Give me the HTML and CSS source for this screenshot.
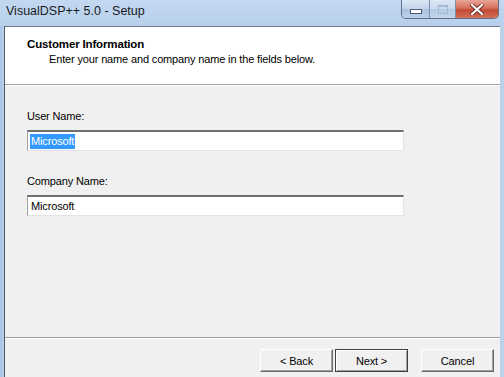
FILE: index.html
```html
<!DOCTYPE html>
<html lang="en-US">
    <head>
        <meta charset="utf-8">
        <title>VisualDSP++ 5.0 - Setup</title>
        <link rel="stylesheet" href="styles.css">
    </head>
    <body>
        <div class="window">
            <div class="titlebar">
                <span class="title">VisualDSP++ 5.0 - Setup</span>
                <div class="controls">
                    <div class="ctl ctl-min"><span class="min-bar"></span></div>
                    <div class="ctl ctl-max"><span class="max-box"></span></div>
                    <div class="ctl ctl-close">
                        <svg width="14" height="11" viewBox="0 0 14 11">
                            <path d="M2 1 L12 10 M12 1 L2 10" stroke="#6a2a22" stroke-width="4" stroke-linecap="square"/>
                            <path d="M2 1 L12 10 M12 1 L2 10" stroke="#ffffff" stroke-width="2.2" stroke-linecap="square"/>
                        </svg>
                    </div>
                </div>
            </div>

            <div class="client">
                <header class="wizard-head">
                    <h1>Customer Information</h1>
                    <p>Enter your name and company name in the fields below.</p>
                </header>

                <main class="wizard-body">
                    <label class="field-label">User Name:</label>
                    <div class="textbox"><span class="selected">Microsoft</span></div>

                    <label class="field-label company">Company Name:</label>
                    <div class="textbox"><span>Microsoft</span></div>
                </main>

                <footer class="wizard-foot">
                    <button class="btn">&lt; Back</button>
                    <button class="btn btn-default">Next &gt;</button>
                    <button class="btn btn-cancel">Cancel</button>
                </footer>
            </div>
        </div>
    </body>
</html>
```

FILE: styles.css
```css
:root {
    font-family: 'Liberation Sans', Arial, sans-serif;
    font-size: 11px;
    letter-spacing: -0.15px;
    color: #000000;
}

body {
    margin: 0;
    width: 504px;
    height: 377px;
    overflow: hidden;
}

.window {
    display: flex;
    flex-direction: column;
    height: 377px;
    background: linear-gradient(to right, #a9c4e6 0, #bdd3ee 5px, #c7dbf2 50%, #bcd2ec 100%);
}

.titlebar {
    position: relative;
    height: 26px;
    background: linear-gradient(to bottom, #c3d8f1 0, #bcd3ee 60%, #b7cfeb 100%);
}

.title {
    position: absolute;
    left: 6px;
    top: 4px;
    font-size: 12.5px;
    letter-spacing: 0;
    color: #1a1a1a;
}

.controls {
    position: absolute;
    right: 5px;
    top: 0;
    display: flex;
    height: 18px;
    border: 1px solid #5d6f86;
    border-top: none;
    border-radius: 0 0 5px 5px;
    overflow: hidden;
}

.ctl {
    display: flex;
    align-items: center;
    justify-content: center;
    height: 18px;
}

.ctl-min {
    width: 27px;
    background: linear-gradient(to bottom, #dbe7f5 0, #c2d5ec 50%, #a9c0de 51%, #bcd0ea 100%);
    border-right: 1px solid #7d8fa6;
}

.min-bar {
    width: 10px;
    height: 3px;
    margin-top: 4px;
    background: #ffffff;
    border: 1px solid #4a5c74;
}

.ctl-max {
    width: 25px;
    background: linear-gradient(to bottom, #dbe7f5 0, #c8d9ee 50%, #b5cae5 51%, #c2d5ec 100%);
    border-right: 1px solid #7d8fa6;
}

.max-box {
    width: 8px;
    height: 6px;
    border: 1px solid #a7b9d0;
    border-top-width: 2px;
}

.ctl-close {
    width: 42px;
    background: linear-gradient(to bottom, #e8a597 0, #d7705d 45%, #c34a35 55%, #d4705a 100%);
}

.client {
    flex: 1;
    display: flex;
    flex-direction: column;
    margin: 0 4px 0 4px;
    border-left: 1px solid #4f5a68;
    border-top: 1px solid #6c7c90;
    background: #f0f0f0;
}

.wizard-head {
    height: 57px;
    background: #ffffff;
    border-bottom: 1px solid #a0a0a0;
    box-shadow: 0 1px 0 #ffffff;
}

.wizard-head h1 {
    margin: 11px 0 0 22px;
    font-size: 11.5px;
    font-weight: bold;
}

.wizard-head p {
    margin: 3px 0 0 44px;
}

.wizard-body {
    flex: 1;
    display: flex;
    flex-direction: column;
    align-items: flex-start;
    padding: 25px 0 0 22px;
}

.field-label {
    display: block;
    height: 14px;
}

.company {
    margin-top: 24px;
}

.textbox {
    box-sizing: border-box;
    width: 377px;
    height: 21px;
    margin-top: 6px;
    padding: 2px 0 0 2px;
    background: #ffffff;
    border: 1px solid #e3e3e3;
    border-top: 2px solid #6e6e6e;
    border-left: 1px solid #a0a0a0;
}

.textbox span {
    display: inline-block;
    line-height: 15px;
    padding: 0 1px;
}

.textbox .selected {
    background: #3399ff;
    color: #ffffff;
}

.wizard-foot {
    display: flex;
    height: 40px;
    padding: 11px 0 0 255px;
    border-top: 1px solid #a0a0a0;
    box-shadow: inset 0 1px 0 #ffffff;
    box-sizing: border-box;
}

.btn {
    box-sizing: border-box;
    width: 73px;
    height: 23px;
    margin: 0;
    padding: 0;
    font-family: 'Liberation Sans', Arial, sans-serif;
    font-size: 11px;
    letter-spacing: -0.15px;
    color: #000000;
    background: #f0f0f0;
    border: 1px solid #ffffff;
    border-right-color: #696969;
    border-bottom-color: #696969;
    box-shadow: inset -1px -1px 0 #a0a0a0;
}

.btn-default {
    margin-left: 2px;
    border: 1px solid #404040;
    box-shadow: inset 1px 1px 0 #ffffff, inset -1px -1px 0 #a0a0a0;
}

.btn-cancel {
    margin-left: 13px;
}
```
